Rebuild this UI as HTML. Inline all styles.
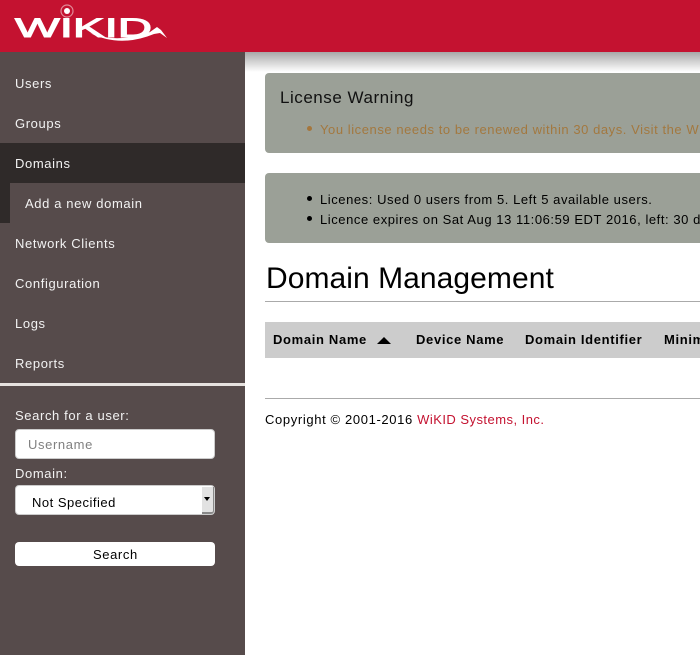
<!DOCTYPE html>
<html><head><meta charset="utf-8"><style>
html,body{margin:0;padding:0;width:700px;height:655px;overflow:hidden;background:#fff;font-family:"Liberation Sans",sans-serif;font-size:13px;color:#000}
div,span,a{position:absolute;white-space:nowrap}
#hd{left:0;top:0;width:700px;height:52px;background:#c41230;z-index:3}
#shadow{left:245px;top:52px;width:455px;height:20px;background:linear-gradient(#a8a8a8,#fff)}
#sb{left:0;top:52px;width:245px;height:603px;background:#564b4b;z-index:2}
.n{left:15px;color:#f2f2f2;line-height:16px;letter-spacing:.62px;z-index:4}
.al{left:265px;width:445px;background:#9ba097;border-radius:4px}
.t{line-height:16px;letter-spacing:.56px}
.b{width:5px;height:5px;border-radius:50%;left:307px}
.th{top:332px;font-weight:bold;line-height:16px;letter-spacing:.66px}
.field{left:15px;width:200px;background:#fff;border-radius:4px;z-index:4;box-sizing:border-box}
</style></head><body>
<div id="hd">
<svg width="245" height="52" style="position:absolute;left:0;top:0">
<text x="15" y="37" font-family="Liberation Sans" font-size="27" fill="#fff" stroke="#fff" stroke-width="1" textLength="137" lengthAdjust="spacingAndGlyphs">WIKID</text>
<circle cx="67" cy="11" r="6" fill="none" stroke="#e08a98" stroke-width="1.2"/>
<circle cx="67" cy="11" r="3" fill="#fff"/>
<path d="M90 33Q117 44 150 32L157 27L161 30L167 38L160 33L154 34Q120 48 90 33Z" fill="#fff"/>
</svg>
</div>
<div id="shadow"></div>
<div id="sb"></div>
<div style="left:0;top:143px;width:245px;height:40px;background:#2f2a29;z-index:3"></div>
<div style="left:0;top:183px;width:10px;height:40px;background:#2f2a29;z-index:3"></div>
<div style="left:0;top:383px;width:245px;height:3px;background:#e6e2df;z-index:3"></div>
<div class="n" style="top:76px">Users</div>
<div class="n" style="top:116px">Groups</div>
<div class="n" style="top:156px">Domains</div>
<div class="n" style="top:196px;left:25px">Add a new domain</div>
<div class="n" style="top:236px">Network Clients</div>
<div class="n" style="top:276px">Configuration</div>
<div class="n" style="top:316px">Logs</div>
<div class="n" style="top:356px">Reports</div>
<div class="n" style="top:408px">Search for a user:</div>
<div class="field" style="top:429px;height:30px;border:1px solid #ccc"></div>
<div class="n" style="top:437px;left:28px;color:#808080">Username</div>
<div class="n" style="top:466px">Domain:</div>
<div class="field" style="top:485px;height:30px;border:1px solid #ccc"></div>
<div class="n" style="top:495px;left:32px;color:#000;letter-spacing:.5px">Not Specified</div>
<div style="left:202px;top:487px;width:12px;height:27px;background:#e2e2e2;border-right:1px solid #888;border-bottom:2px solid #888;border-radius:0 0 3px 0;box-sizing:border-box;z-index:5"></div>
<div style="left:204px;top:497px;width:0;height:0;border-left:3px solid transparent;border-right:3px solid transparent;border-top:4px solid #000;z-index:6"></div>
<div class="field" style="top:542px;height:24px"></div>
<div class="n" style="top:547px;left:93px;color:#000;letter-spacing:.6px">Search</div>

<div class="al" style="top:73px;height:80px"></div>
<div class="t" style="left:280px;top:88px;font-size:17px;line-height:20px;letter-spacing:.53px;color:#111">License Warning</div>
<div class="b" style="top:126px;background:#a5763c"></div>
<div class="t" style="left:320px;top:122px;color:#a3783f">You license needs to be renewed within 30 days. Visit the WiKID</div>
<div class="al" style="top:173px;height:70px"></div>
<div class="b" style="top:196px;background:#000"></div>
<div class="t" style="left:320px;top:192px">Licenes: Used 0 users from 5. Left 5 available users.</div>
<div class="b" style="top:216px;background:#000"></div>
<div class="t" style="left:320px;top:212px">Licence expires on Sat Aug 13 11:06:59 EDT 2016, left: 30 days</div>
<div style="left:266px;top:261px;font-size:30px;line-height:36px;letter-spacing:.06px;color:#000">Domain Management</div>
<div style="left:265px;top:301px;width:435px;height:1px;background:#aaa"></div>
<div style="left:265px;top:322px;width:435px;height:36px;background:#ccc"></div>
<div class="th" style="left:273px">Domain Name</div>
<div style="left:377px;top:337px;width:0;height:0;border-left:7px solid transparent;border-right:7px solid transparent;border-bottom:7px solid #000"></div>
<div class="th" style="left:416px">Device Name</div>
<div class="th" style="left:525px">Domain Identifier</div>
<div class="th" style="left:664px">Minimum</div>
<div style="left:265px;top:398px;width:435px;height:1px;background:#aaa"></div>
<div class="t" style="left:265px;top:412px;letter-spacing:.63px">Copyright © 2001-2016 <span style="position:static;color:#c41230;letter-spacing:.47px">WiKID Systems, Inc.</span></div>
</body></html>
